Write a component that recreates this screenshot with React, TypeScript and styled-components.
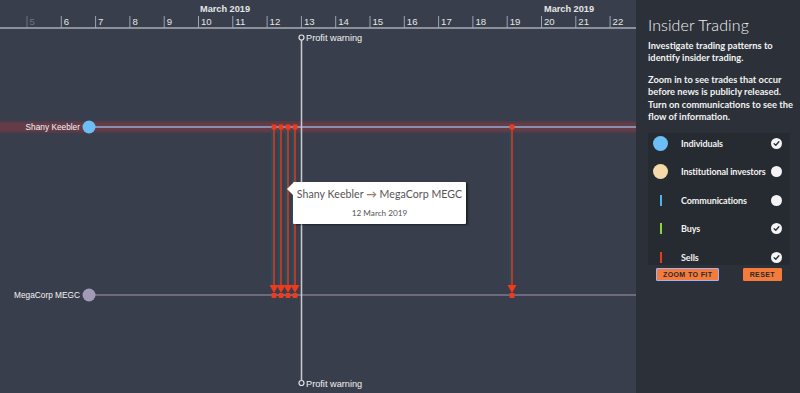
import React from "react";
import styled, { createGlobalStyle } from "styled-components";

const GlobalStyle = createGlobalStyle`
  html, body {
    margin: 0;
    padding: 0;
    background: #383e4b;
  }
  * { box-sizing: border-box; }
`;

const Page = styled.div`
  display: flex;
  width: 800px;
  height: 393px;
  overflow: hidden;
  font-family: "Liberation Sans", Arial, sans-serif;
`;

const ChartArea = styled.div`
  position: relative;
  width: 636px;
  height: 100%;
  background: #383e4b;
`;

const ChartSvg = styled.svg`
  display: block;
`;

const Tooltip = styled.div`
  position: absolute;
  left: 293px;
  top: 182px;
  width: 173px;
  height: 42px;
  background: #fff;
  border-radius: 1px;
  box-shadow: 2px 1px 2px rgba(0, 0, 0, 0.45);
  display: flex;
  flex-direction: column;
  align-items: center;
  padding-top: 5px;
  font-family: "Lato", "Noto Sans", sans-serif;
  color: #555;

  &::before {
    content: "";
    position: absolute;
    left: -6px;
    top: 1px;
    border-top: 6px solid transparent;
    border-bottom: 6px solid transparent;
    border-right: 6px solid #fff;
  }
`;

const TipTitle = styled.div`
  font-size: 10.6px;
  line-height: 15px;
  white-space: nowrap;
  letter-spacing: 0.05px;
`;

const TipArrow = styled.span`
  color: #a07a68;
  font-weight: 700;
`;

const TipDate = styled.div`
  font-size: 8.2px;
  margin-top: 6px;
`;

const SidePanel = styled.aside`
  width: 164px;
  height: 100%;
  background: #2c3139;
  padding: 15px 6px 0 12px;
  color: #f2f2f2;
  font-family: "Lato", "Noto Sans", sans-serif;
  display: flex;
  flex-direction: column;
`;

const Title = styled.h1`
  margin: 0;
  font-size: 16px;
  font-weight: 300;
  line-height: 20px;
  letter-spacing: 0.1px;
`;

const Para = styled.p<{ $top: number }>`
  margin: 0;
  margin-top: ${(p) => p.$top}px;
  font-size: 9.3px;
  font-weight: 700;
  line-height: 12.4px;
`;

const LegendCard = styled.div`
  margin-top: 10px;
  margin-right: 4px;
  background: #262a31;
  height: 132px;
  padding: 2px 4px 0 4px;
  display: flex;
  flex-direction: column;
  gap: 12.5px;
`;

const LegendRow = styled.div`
  display: flex;
  align-items: center;
  height: 16px;
  font-size: 9px;
  font-weight: 700;
  letter-spacing: -0.1px;
`;

const IconCell = styled.div`
  width: 17px;
  display: flex;
  justify-content: center;
  align-items: center;
`;

const Dot = styled.span<{ $color: string }>`
  width: 15px;
  height: 15px;
  border-radius: 50%;
  background: ${(p) => p.$color};
`;

const Bar = styled.span<{ $color: string }>`
  width: 2px;
  height: 11px;
  background: ${(p) => p.$color};
`;

const RowLabel = styled.span`
  flex: 1;
  padding-left: 12px;
  white-space: nowrap;
`;

const Check = styled.span`
  width: 11px;
  height: 11px;
  border-radius: 50%;
  background: #f4f4f6;
  display: flex;
  align-items: center;
  justify-content: center;
  margin-right: 4px;
`;

const ButtonRow = styled.div`
  display: flex;
  justify-content: space-between;
  padding: 3px 12px 0 8px;
`;

const ActionButton = styled.button`
  height: 13px;
  padding: 0 6px;
  background: #f57b3b;
  border: 1px solid #f57b3b;
  border-radius: 1px;
  color: #2a2a2a;
  font-family: "Liberation Sans", Arial, sans-serif;
  font-size: 7px;
  font-weight: 700;
  letter-spacing: 0.4px;
  line-height: 11px;

  &.focused {
    border-color: #9fb1ff;
  }
`;

const FONT = "Liberation Sans, Arial, sans-serif";
const tickX = (d: number) => 27 + (d - 5) * 34.3;
const days = Array.from({ length: 18 }, (_, i) => i + 5);
const trades = [274, 281, 288, 295, 512];
const SHANY_Y = 127;
const MEGA_Y = 295;

const Timeline: React.FC = () => (
  <ChartSvg width={636} height={393}>
    {/* axis */}
    <text x={200} y={12} fill="#e6e6e6" fontSize={9.2} fontWeight={700} fontFamily={FONT}>
      March 2019
    </text>
    <text x={544} y={12} fill="#e6e6e6" fontSize={9.2} fontWeight={700} fontFamily={FONT}>
      March 2019
    </text>
    {days.map((d) => (
      <g key={d}>
        <line x1={tickX(d)} x2={tickX(d)} y1={16} y2={28} stroke={d === 5 ? "#6a7080" : "#9ea3ad"} strokeWidth={1} />
        <text x={tickX(d) + 2.5} y={25} fill={d === 5 ? "#6f7584" : "#e6e6e6"} fontSize={9.6} fontFamily={FONT}>
          {d}
        </text>
      </g>
    ))}
    <line x1={0} x2={636} y1={28} y2={28} stroke="#a8acb4" strokeWidth={1.5} />

    {/* Shany Keebler row */}
    <rect x={0} y={SHANY_Y - 6} width={636} height={12} fill="#553b47" />
    <rect x={0} y={SHANY_Y - 4} width={636} height={8} fill="#643c46" />
    <line x1={89} x2={636} y1={SHANY_Y} y2={SHANY_Y} stroke="#8790b0" strokeWidth={2} />

    {/* MegaCorp row */}
    <line x1={89} x2={636} y1={MEGA_Y} y2={MEGA_Y} stroke="#6d6a80" strokeWidth={2} />

    {/* trades */}
    {trades.map((x) => (
      <g key={x}>
        <line x1={x - 2} x2={x - 2} y1={SHANY_Y + 2} y2={MEGA_Y - 8} stroke="#1f5560" strokeWidth={1.5} />
        <line x1={x} x2={x} y1={SHANY_Y} y2={MEGA_Y - 8} stroke="#e3391d" strokeWidth={1.5} />
        <rect x={x - 2.5} y={SHANY_Y - 2.5} width={5} height={5} rx={1} fill="#f03a1c" />
        <polygon points={`${x - 4.5},${MEGA_Y - 10} ${x + 4.5},${MEGA_Y - 10} ${x},${MEGA_Y - 2}`} fill="#f03a1c" />
        <rect x={x - 2.5} y={MEGA_Y - 2} width={5} height={5} rx={1} fill="#f03a1c" />
      </g>
    ))}

    {/* nodes */}
    <circle cx={89} cy={SHANY_Y} r={6.5} fill="#6cbff6" />
    <circle cx={89} cy={MEGA_Y} r={6.5} fill="#a39ab8" />
    <text x={80} y={SHANY_Y + 3} textAnchor="end" fill="#f4f4f4" fontSize={8.3} fontFamily={FONT}>
      Shany Keebler
    </text>
    <text x={80} y={MEGA_Y + 3} textAnchor="end" fill="#f4f4f4" fontSize={8.3} fontFamily={FONT}>
      MegaCorp MEGC
    </text>

    {/* profit warning */}
    <line x1={301.5} x2={301.5} y1={40} y2={380} stroke="#c9cbd0" strokeWidth={1.5} />
    <circle cx={301.5} cy={37.5} r={2.5} fill="#383e4b" stroke="#e0e0e0" strokeWidth={1.2} />
    <circle cx={301.5} cy={383} r={2.5} fill="#383e4b" stroke="#e0e0e0" strokeWidth={1.2} />
    <text x={306} y={41} fill="#f2f2f2" fontSize={9.2} fontFamily={FONT}>
      Profit warning
    </text>
    <text x={306} y={387} fill="#f2f2f2" fontSize={9.2} fontFamily={FONT}>
      Profit warning
    </text>
  </ChartSvg>
);

const CheckMark: React.FC = () => (
  <svg width={7} height={7} viewBox="0 0 8 8">
    <path d="M1.3 4.2 L3.2 6 L6.7 2" fill="none" stroke="#2a2e36" strokeWidth={1.5} strokeLinecap="round" strokeLinejoin="round" />
  </svg>
);

type LegendItem = {
  label: string;
  kind: "dot" | "bar";
  color: string;
  checked: boolean;
};

const legend: LegendItem[] = [
  { label: "Individuals", kind: "dot", color: "#6cbff6", checked: true },
  { label: "Institutional investors", kind: "dot", color: "#f5d9a8", checked: false },
  { label: "Communications", kind: "bar", color: "#4fb3ea", checked: false },
  { label: "Buys", kind: "bar", color: "#8fd33a", checked: true },
  { label: "Sells", kind: "bar", color: "#ea3a1c", checked: true },
];

const App: React.FC = () => {
  return (
    <>
      <GlobalStyle />
      <Page>
        <ChartArea>
          <Timeline />
          <Tooltip>
            <TipTitle>
              Shany Keebler <TipArrow>→</TipArrow> MegaCorp MEGC
            </TipTitle>
            <TipDate>12 March 2019</TipDate>
          </Tooltip>
        </ChartArea>

        <SidePanel>
          <Title>Insider Trading</Title>
          <Para $top={5}>Investigate trading patterns to identify insider trading.</Para>
          <Para $top={9}>
            Zoom in to see trades that occur before news is publicly released. Turn on communications to see
            the flow of information.
          </Para>

          <LegendCard>
            {legend.map((item) => (
              <LegendRow key={item.label}>
                <IconCell>
                  {item.kind === "dot" ? <Dot $color={item.color} /> : <Bar $color={item.color} />}
                </IconCell>
                <RowLabel>{item.label}</RowLabel>
                <Check>{item.checked && <CheckMark />}</Check>
              </LegendRow>
            ))}
          </LegendCard>

          <ButtonRow>
            <ActionButton className="focused">ZOOM TO FIT</ActionButton>
            <ActionButton>RESET</ActionButton>
          </ButtonRow>
        </SidePanel>
      </Page>
    </>
  );
};

export default App;
